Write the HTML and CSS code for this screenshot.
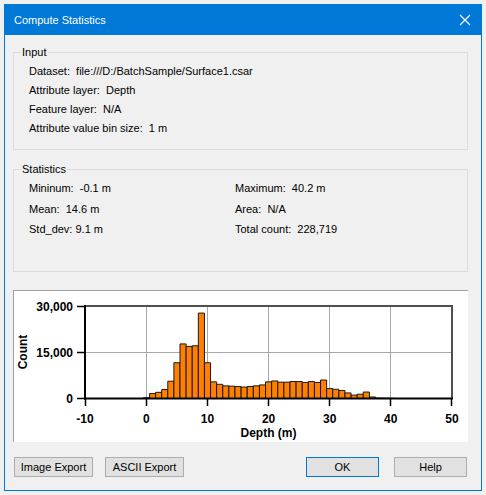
FILE: index.html
```html
<!DOCTYPE html>
<html>
<head>
<meta charset="utf-8">
<title>Compute Statistics</title>
<link rel="stylesheet" href="styles.css">
</head>
<body>
<div class="window">
  <div class="titlebar">
    <span class="title">Compute Statistics</span>
    <svg class="close" width="12" height="12" viewBox="0 0 12 12"><path d="M1 1 L11 11 M11 1 L1 11" stroke="#fff" stroke-width="1.2" fill="none"/></svg>
  </div>
  <fieldset class="group input">
    <legend>Input</legend>
    <div class="row">Dataset:  file:///D:/BatchSample/Surface1.csar</div>
    <div class="row">Attribute layer:  Depth</div>
    <div class="row">Feature layer:  N/A</div>
    <div class="row">Attribute value bin size:  1 m</div>
  </fieldset>
  <fieldset class="group stats">
    <legend>Statistics</legend>
    <div class="stats-grid">
      <div class="row">Mininum:  -0.1 m</div>
      <div class="row">Maximum:  40.2 m</div>
      <div class="row">Mean:  14.6 m</div>
      <div class="row">Area:  N/A</div>
      <div class="row">Std_dev: 9.1 m</div>
      <div class="row">Total count:  228,719</div>
    </div>
  </fieldset>
  <div class="chart">
    <svg width="454" height="151" viewBox="0 0 454 151">
      <g class="grid">
        <line x1="132.5" y1="15" x2="132.5" y2="107.5"/>
        <line x1="193.5" y1="15" x2="193.5" y2="107.5"/>
        <line x1="254.5" y1="15" x2="254.5" y2="107.5"/>
        <line x1="315.5" y1="15" x2="315.5" y2="107.5"/>
        <line x1="376.5" y1="15" x2="376.5" y2="107.5"/>
        <line x1="71" y1="61.5" x2="438" y2="61.5"/>
      </g>
      <g class="bars" transform="translate(132.4 107.5) scale(6.11 -0.0030833)">
        <rect x="-0.5" width="1" height="250"/>
        <rect x="0.5" width="1" height="1600"/>
        <rect x="1.5" width="1" height="2000"/>
        <rect x="2.5" width="1" height="2900"/>
        <rect x="3.5" width="1" height="5600"/>
        <rect x="4.5" width="1" height="11600"/>
        <rect x="5.5" width="1" height="17700"/>
        <rect x="6.5" width="1" height="16900"/>
        <rect x="7.5" width="1" height="17100"/>
        <rect x="8.5" width="1" height="27700"/>
        <rect x="9.5" width="1" height="11600"/>
        <rect x="10.5" width="1" height="5400"/>
        <rect x="11.5" width="1" height="4600"/>
        <rect x="12.5" width="1" height="4100"/>
        <rect x="13.5" width="1" height="4000"/>
        <rect x="14.5" width="1" height="3900"/>
        <rect x="15.5" width="1" height="3700"/>
        <rect x="16.5" width="1" height="3900"/>
        <rect x="17.5" width="1" height="4100"/>
        <rect x="18.5" width="1" height="4400"/>
        <rect x="19.5" width="1" height="5400"/>
        <rect x="20.5" width="1" height="5700"/>
        <rect x="21.5" width="1" height="5300"/>
        <rect x="22.5" width="1" height="5300"/>
        <rect x="23.5" width="1" height="5500"/>
        <rect x="24.5" width="1" height="5500"/>
        <rect x="25.5" width="1" height="5200"/>
        <rect x="26.5" width="1" height="5500"/>
        <rect x="27.5" width="1" height="5200"/>
        <rect x="28.5" width="1" height="6000"/>
        <rect x="29.5" width="1" height="3200"/>
        <rect x="30.5" width="1" height="3000"/>
        <rect x="31.5" width="1" height="2600"/>
        <rect x="32.5" width="1" height="1800"/>
        <rect x="33.5" width="1" height="1100"/>
        <rect x="34.5" width="1" height="1400"/>
        <rect x="35.5" width="1" height="2100"/>
        <rect x="36.5" width="1" height="500"/>
        <rect x="37.5" width="1" height="150"/>
        <rect x="38.5" width="1" height="100"/>
        <rect x="39.5" width="1" height="80"/>
      </g>
      <g class="frame">
        <line x1="71" y1="15" x2="439" y2="15"/>
        <line x1="438" y1="15" x2="438" y2="108"/>
      </g>
      <g class="axis">
        <line x1="71" y1="14" x2="71" y2="108.5"/>
        <line x1="70" y1="107.5" x2="439" y2="107.5"/>
      </g>
      <g class="ticks">
        <line x1="71.5" y1="107.5" x2="71.5" y2="115"/>
        <line x1="132.5" y1="107.5" x2="132.5" y2="115"/>
        <line x1="193.5" y1="107.5" x2="193.5" y2="115"/>
        <line x1="254.5" y1="107.5" x2="254.5" y2="115"/>
        <line x1="315.5" y1="107.5" x2="315.5" y2="115"/>
        <line x1="376.5" y1="107.5" x2="376.5" y2="115"/>
        <line x1="437.5" y1="107.5" x2="437.5" y2="115"/>
        <line x1="63" y1="15.5" x2="71" y2="15.5"/>
        <line x1="63" y1="61.5" x2="71" y2="61.5"/>
        <line x1="63" y1="107.5" x2="71" y2="107.5"/>
      </g>
      <g class="ylabels">
        <text x="59" y="19.5">30,000</text>
        <text x="59" y="65.8">15,000</text>
        <text x="59" y="111.8">0</text>
      </g>
      <g class="xlabels">
        <text x="71" y="131.5">-10</text>
        <text x="132.4" y="131.5">0</text>
        <text x="193.5" y="131.5">10</text>
        <text x="254.6" y="131.5">20</text>
        <text x="315.7" y="131.5">30</text>
        <text x="376.8" y="131.5">40</text>
        <text x="438" y="131.5">50</text>
        <text x="254.5" y="145.5">Depth (m)</text>
      </g>
      <text class="ytitle" transform="translate(13 61) rotate(-90)">Count</text>
    </svg>
  </div>
  <div class="buttons">
    <button class="btn wide">Image Export</button>
    <button class="btn wide">ASCII Export</button>
    <span class="spacer"></span>
    <button class="btn narrow default">OK</button>
    <button class="btn narrow">Help</button>
  </div>
</div>
</body>
</html>
```
FILE: styles.css
```css
html, body {
  margin: 0;
  padding: 0;
  background: #f0f0f0;
}
body {
  font-family: "Liberation Sans", Arial, sans-serif;
  font-size: 11px;
  color: #000;
}
.window {
  box-sizing: border-box;
  margin: 4px 0 0 4px;
  width: 478px;
  height: 487px;
  border: 1px solid #0078d7;
  border-top: none;
  background: #f0f0f0;
  display: flex;
  flex-direction: column;
}
.titlebar {
  height: 31px;
  margin: 0 -1px;
  background: #0078d7;
  color: #fff;
  display: flex;
  align-items: center;
  padding: 0 11px 0 10px;
  font-size: 11px;
}
.title {
  flex: 1;
  line-height: 14px;
}
.close {
  display: block;
}
.group {
  border: 1px solid #dcdcdc;
  margin: 10px 13px 0 8px;
  padding: 3px 14px 11px 15px;
  min-width: 0;
}
.group legend {
  padding: 0 1px;
  margin-left: -8px;
  line-height: 14px;
}
.row {
  white-space: pre;
  line-height: 19px;
}
.stats {
  margin-top: 12px;
  padding: 2px 14px 31px 15px;
}
.stats-grid {
  display: grid;
  grid-template-columns: 206px 1fr;
}
.stats-grid .row {
  line-height: 20.5px;
}
.chart {
  margin: 18px 13px 0 8px;
  border-top: 1px solid #a0a0a0;
  border-left: 1px solid #a0a0a0;
  background: #fff;
  height: 151px;
}
.chart svg {
  display: block;
  font-family: "Liberation Sans", Arial, sans-serif;
  font-weight: bold;
  font-size: 12px;
}
.grid line {
  stroke: #a8a8a8;
  stroke-width: 1;
}
.bars rect {
  fill: #ff8000;
  stroke: #1a1a1a;
  stroke-width: 1;
  vector-effect: non-scaling-stroke;
}
.frame line {
  stroke: #505050;
  stroke-width: 2;
}
.axis line {
  stroke: #000;
  stroke-width: 2;
}
.ticks line {
  stroke: #000;
  stroke-width: 1.5;
}
.ylabels text {
  text-anchor: end;
  fill: #000;
}
.xlabels text {
  text-anchor: middle;
  fill: #000;
}
.ytitle {
  text-anchor: middle;
  fill: #000;
}
.buttons {
  display: flex;
  margin: 15px 14px 0 9px;
  gap: 12px;
}
.spacer {
  flex: 1;
}
.btn {
  box-sizing: border-box;
  height: 20px;
  background: #e1e1e1;
  border: 1px solid #adadad;
  font-family: "Liberation Sans", Arial, sans-serif;
  font-size: 11px;
  color: #000;
  padding: 0;
  border-radius: 0;
}
.btn.wide {
  width: 79px;
}
.btn.narrow {
  width: 73px;
}
.btn.default {
  border-color: #0078d7;
  margin-right: 3px;
}
```
